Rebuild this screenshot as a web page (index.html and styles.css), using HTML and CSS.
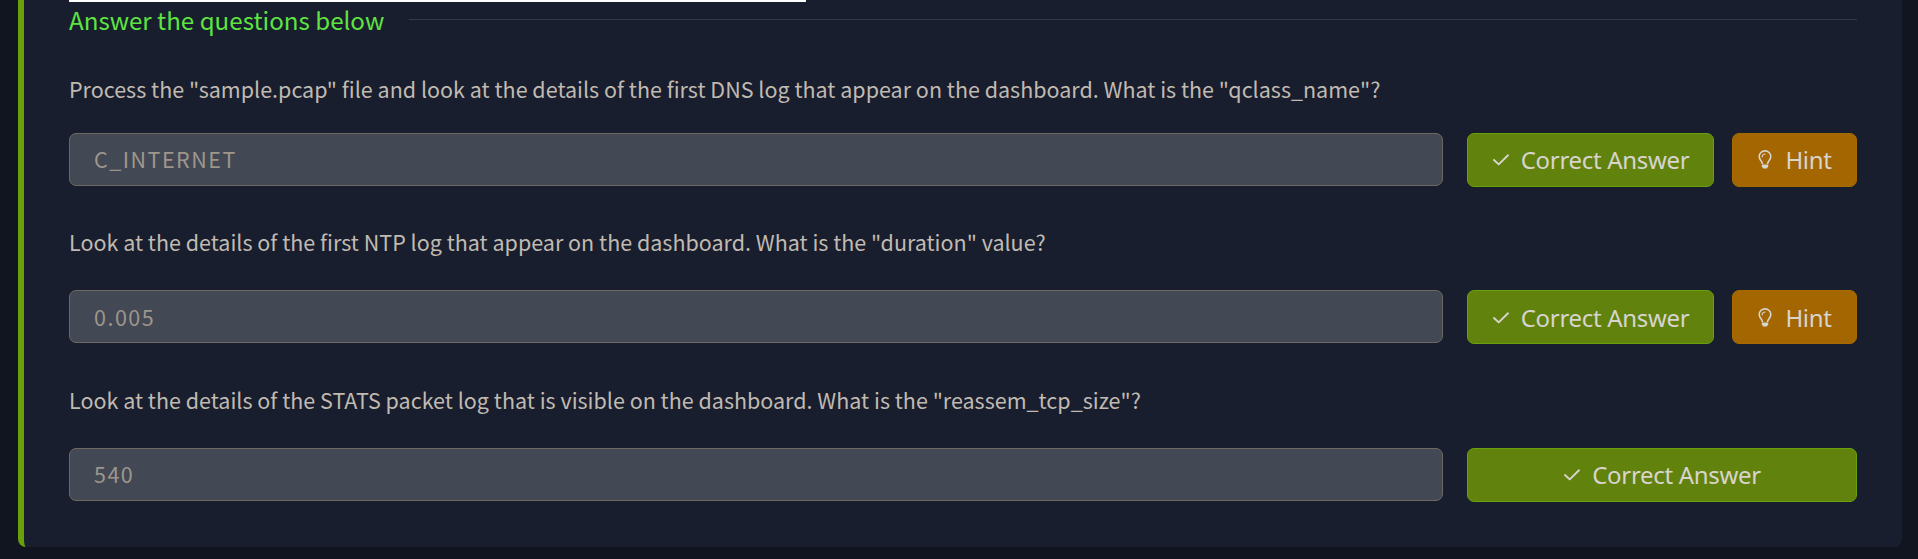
FILE: index.html
```html
<!DOCTYPE html>
<html lang="en">
<head>
<meta charset="utf-8">
<title>Questions</title>
<link rel="stylesheet" href="styles.css">
</head>
<body>
<svg class="sprite" aria-hidden="true">
  <symbol id="check" viewBox="0 0 18 14"><path d="M2 7 L6.7 11.4 L16 2.3" fill="none" stroke="currentColor" stroke-width="1.9" stroke-linecap="round" stroke-linejoin="round"/></symbol>
  <symbol id="bulb" viewBox="0 0 14 20"><path d="M4.5 14 C4.5 11.2 1.2 10 1.2 6.5 A5.8 5.6 0 0 1 12.8 6.5 C12.8 10 9.5 11.2 9.5 14" fill="none" stroke="currentColor" stroke-width="1.6" stroke-linejoin="round"/><path d="M4.2 6.8 A2.8 2.8 0 0 1 7 4" fill="none" stroke="currentColor" stroke-width="1.2" stroke-linecap="round"/><path d="M3.8 14.6h6.4v1.6L8.9 18.6H5.1L3.8 16.2Z" fill="currentColor"/></symbol>
</svg>
<main class="card">
  <div class="media-edge"></div>
  <header class="heading"><h2 class="title">Answer the questions below</h2><span class="rule"></span></header>
  <section class="question">
    <p class="prompt">Process the "sample.pcap" file and look at the details of the first DNS log that appear on the dashboard. What is the "qclass_name"?</p>
    <div class="row">
      <div class="answer">C_INTERNET</div>
      <div class="actions">
        <button class="btn correct"><svg class="check"><use href="#check"/></svg><span>Correct Answer</span></button>
        <button class="btn hint"><svg class="bulb"><use href="#bulb"/></svg><span>Hint</span></button>
      </div>
    </div>
  </section>
  <section class="question middle">
    <p class="prompt">Look at the details of the first NTP log that appear on the dashboard. What is the "duration" value?</p>
    <div class="row">
      <div class="answer">0.005</div>
      <div class="actions">
        <button class="btn correct"><svg class="check"><use href="#check"/></svg><span>Correct Answer</span></button>
        <button class="btn hint"><svg class="bulb"><use href="#bulb"/></svg><span>Hint</span></button>
      </div>
    </div>
  </section>
  <section class="question last">
    <p class="prompt">Look at the details of the STATS packet log that is visible on the dashboard. What is the "reassem_tcp_size"?</p>
    <div class="row">
      <div class="answer">540</div>
      <div class="actions">
        <button class="btn correct"><svg class="check"><use href="#check"/></svg><span>Correct Answer</span></button>
      </div>
    </div>
  </section>
</main>
</body>
</html>
```
FILE: styles.css
```css
* { box-sizing: border-box; }
body { margin: 0; height: 559px; overflow: hidden; background: #11151f; font-family: "Noto Sans CJK SC", "Noto Sans", sans-serif; color: #c0bab2; }
.sprite { display: none; }
.card { margin: 0 16px 0 18px; height: 547px; padding: 0 45px; background: #181e2d; border-left: 6px solid #69a00c; border-radius: 0 0 8px 8px; }
.media-edge { width: 737px; height: 2px; background: #fff; }
.heading { display: flex; align-items: center; gap: 24px; height: 34px; }
.title { margin: 0; font-size: 24.15px; font-weight: 400; line-height: 34px; padding-top: 2px; color: #5fe342; white-space: nowrap; width: 316px; }
.rule { flex: 1; height: 1px; background: #343b47; }
.question { padding-top: 35px; height: 151px; }
.question .prompt { height: 62px; }
.question + .question { height: 157px; padding-top: 37px; }
.question + .question .prompt { height: 66px; }
.question.last { height: 158px; padding-top: 38px; }
.prompt { margin: 0; font-size: 21.5px; line-height: 36px; white-space: nowrap; }
.row { display: grid; grid-template-columns: 1374px 390px; gap: 24px; align-items: start; }
.answer { height: 53px; padding: 0 24px; border: 1px solid #6e6860; border-radius: 7px; background: #434855; color: #9e968b; font-size: 21.5px; line-height: 50px; letter-spacing: 1.5px; }
.middle .answer { line-height: 52px; }
.actions { display: flex; gap: 18px; }
.btn { display: flex; flex: 1; justify-content: center; align-items: center; height: 54px; padding: 0; border: 1px solid #69a00c; border-radius: 7px; background: #62820e; color: #d8d4ce; font: 24px/50px "Noto Sans", sans-serif; letter-spacing: -0.32px; white-space: nowrap; }
.middle .btn { padding-top: 2px; }
.btn.hint { flex: 0 0 125px; padding-left: 1px; border-color: #a56a00; background: #a36600; }
.check { width: 18px; height: 14px; margin-right: 11px; }
.bulb { width: 14px; height: 20px; margin-right: 13px; }
```
